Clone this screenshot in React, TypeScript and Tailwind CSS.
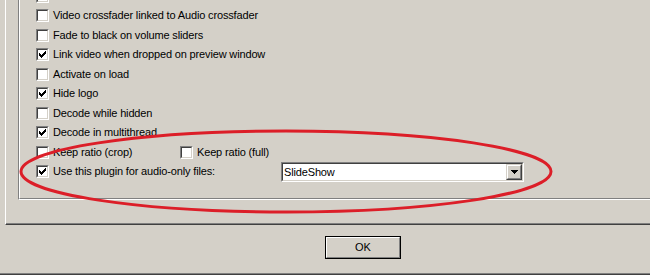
import type { ReactNode } from 'react'

const font = { fontFamily: '"Liberation Sans", Arial, sans-serif' }

function CheckBox({ checked }: { checked?: boolean }) {
    return (
        <div className="w-[13px] h-[13px] shrink-0 border border-t-[#808080] border-l-[#808080] border-r-white border-b-white">
            <div className="w-full h-full border border-t-[#404040] border-l-[#404040] border-r-[#d4d0c8] border-b-[#d4d0c8] bg-white">
                {checked && (
                    <svg width="9" height="9" viewBox="0 0 9 9" shapeRendering="crispEdges">
                        <path
                            d="M7 1h1v1h-1zM6 2h2v1h-2zM1 3h1v1h-1zM5 3h3v1h-3zM1 4h2v1h-2zM4 4h3v1h-3zM1 5h5v1h-5zM2 6h3v1h-3zM3 7h1v1h-1z"
                            fill="#000"
                        />
                    </svg>
                )}
            </div>
        </div>
    )
}

function Row({ children }: { children: ReactNode }) {
    return <div className="h-[19.5px] flex items-center">{children}</div>
}

function Option({ label, checked }: { label: string; checked?: boolean }) {
    return (
        <div className="flex items-center">
            <CheckBox checked={checked} />
            <span className="ml-[4px] text-[11px] leading-none tracking-[-0.15px] text-black whitespace-nowrap">{label}</span>
        </div>
    )
}

function ComboBox({ value }: { value: string }) {
    return (
        <div className="w-[243px] h-[20px] border border-t-[#808080] border-l-[#808080] border-r-white border-b-white">
            <div className="w-full h-full flex border border-t-[#404040] border-l-[#404040] border-r-[#d4d0c8] border-b-[#d4d0c8] bg-white">
                <span className="flex-1 pl-[1px] text-[11px] leading-[16px] tracking-[-0.15px] text-black">{value}</span>
                <div className="w-[16px] h-full border border-t-[#d4d0c8] border-l-[#d4d0c8] border-r-[#404040] border-b-[#404040]">
                    <div className="w-full h-full flex items-center justify-center bg-[#d4d0c8] border border-t-white border-l-white border-r-[#808080] border-b-[#808080]">
                        <svg width="7" height="4" viewBox="0 0 7 4" shapeRendering="crispEdges">
                            <path d="M0 0h7v1h-7zM1 1h5v1h-5zM2 2h3v1h-3zM3 3h1v1h-1z" fill="#000" />
                        </svg>
                    </div>
                </div>
            </div>
        </div>
    )
}

export default function App() {
    return (
        <div className="relative w-[650px] h-[275px] overflow-hidden bg-[#d4d0c8] flex flex-col" style={font}>
            {/* tab page */}
            <div className="mt-[-20px] ml-[5px] w-[700px] h-[245px] shrink-0 border-l border-l-white border-b border-b-[#404040]">
                <div className="h-[244px] border-b border-b-[#808080]">
                    {/* group box, etched */}
                    <div className="ml-[12px] h-[220px] border-l border-b border-l-[#808080] border-b-white">
                        <div className="h-full flex flex-col pt-[6.25px] pl-[16px] border-l border-b border-l-white border-b-[#808080]">
                            <Row>
                                <CheckBox />
                            </Row>
                            <Row>
                                <Option label="Video crossfader linked to Audio crossfader" />
                            </Row>
                            <Row>
                                <Option label="Fade to black on volume sliders" />
                            </Row>
                            <Row>
                                <Option label="Link video when dropped on preview window" checked />
                            </Row>
                            <Row>
                                <Option label="Activate on load" />
                            </Row>
                            <Row>
                                <Option label="Hide logo" checked />
                            </Row>
                            <Row>
                                <Option label="Decode while hidden" />
                            </Row>
                            <Row>
                                <Option label="Decode in multithread" checked />
                            </Row>
                            <Row>
                                <div className="w-[144px]">
                                    <Option label="Keep ratio (crop)" />
                                </div>
                                <Option label="Keep ratio (full)" />
                            </Row>
                            <Row>
                                <div className="w-[245px]">
                                    <Option label="Use this plugin for audio-only files:" checked />
                                </div>
                                <ComboBox value="SlideShow" />
                            </Row>
                        </div>
                    </div>
                </div>
            </div>

            {/* dialog buttons */}
            <div className="flex-1 border-b border-b-[#404040]">
                <div className="h-full border-b border-b-[#808080]">
                    <button className="mt-[11px] ml-[325px] w-[76px] h-[23px] border border-black bg-[#d4d0c8]">
                        <div className="w-full h-full flex items-center justify-center border border-t-white border-l-white border-r-[#808080] border-b-[#808080] text-[11px] text-black">
                            OK
                        </div>
                    </button>
                </div>
            </div>

            {/* red marker ellipse */}
            <svg className="absolute inset-0 pointer-events-none" width="650" height="275" viewBox="0 0 650 275">
                <ellipse cx="286" cy="171.5" rx="265" ry="40.5" fill="none" stroke="#dc1e28" strokeWidth="3" />
            </svg>
        </div>
    )
}
